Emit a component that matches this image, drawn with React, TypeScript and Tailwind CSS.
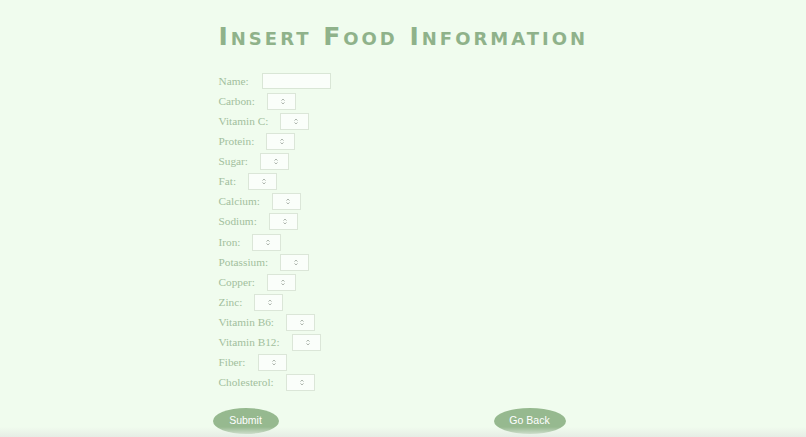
import React from 'react';

const fields = [
    'Carbon',
    'Vitamin C',
    'Protein',
    'Sugar',
    'Fat',
    'Calcium',
    'Sodium',
    'Iron',
    'Potassium',
    'Copper',
    'Zinc',
    'Vitamin B6',
    'Vitamin B12',
    'Fiber',
    'Cholesterol',
];

function Spinner() {
    return (
        <svg width="4" height="7" viewBox="0 0 4 7" className="text-[#9aa39a]">
            <path d="M0.5 2.6 L2 1 L3.5 2.6" fill="none" stroke="currentColor" strokeWidth="0.8" />
            <path d="M0.5 4.4 L2 6 L3.5 4.4" fill="none" stroke="currentColor" strokeWidth="0.8" />
        </svg>
    );
}

export default function App() {
    return (
        <div className="relative min-h-[437px] w-full overflow-hidden bg-[#f0fcee]">
            <div className="mx-auto flex w-[369px] flex-col pt-[23px]">
                <h1
                    className="text-center text-[25px] leading-[28px] font-bold tracking-[3px] whitespace-nowrap text-[#8fb28a] [font-variant:small-caps]"
                    style={{ fontFamily: '"DejaVu Sans", sans-serif' }}
                >
                    Insert Food Information
                </h1>

                <form
                    className="mt-[20px] flex flex-col text-[11.3px] text-[#a2bf9d]"
                    style={{ fontFamily: '"Liberation Serif", serif' }}
                    onSubmit={(e) => e.preventDefault()}
                >
                    <div className="flex h-[20.13px] items-center">
                        <label htmlFor="name">Name:</label>
                        <input
                            id="name"
                            type="text"
                            className="ml-[13px] h-[16px] w-[69px] border border-[#d9e6d6] bg-[#fafefa] outline-none"
                        />
                    </div>
                    {fields.map((f) => (
                        <div key={f} className="flex h-[20.13px] items-center">
                            <label>{f}:</label>
                            <div className="ml-[12px] flex h-[17px] w-[29px] items-center justify-end border border-[#dbe6d8] bg-[#fafefa] pr-[10px]">
                                <Spinner />
                            </div>
                        </div>
                    ))}

                    <div className="mt-[15px] -ml-[6px] flex gap-[215px]" style={{ fontFamily: '"Liberation Sans", sans-serif' }}>
                        <button
                            type="submit"
                            className="h-[26px] w-[66px] rounded-[50%] bg-[#96b98f] text-[10.5px] text-white"
                        >
                            Submit
                        </button>
                        <button
                            type="button"
                            className="h-[26px] w-[72px] rounded-[50%] bg-[#96b98f] text-[10.5px] text-white"
                        >
                            Go Back
                        </button>
                    </div>
                </form>
            </div>
            <div className="pointer-events-none absolute bottom-0 left-0 h-[10px] w-full bg-gradient-to-b from-transparent to-[#e6ede5]" />
        </div>
    );
}
